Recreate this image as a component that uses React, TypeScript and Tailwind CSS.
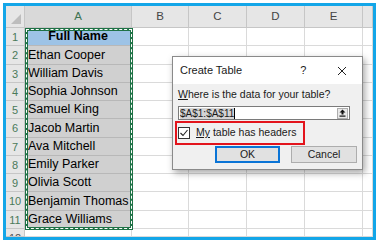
import React from "react";

const names = [
  "Ethan Cooper",
  "William Davis",
  "Sophia Johnson",
  "Samuel King",
  "Jacob Martin",
  "Ava Mitchell",
  "Emily Parker",
  "Olivia Scott",
  "Benjamin Thomas",
  "Grace Williams",
];

const cols = ["A", "B", "C", "D", "E", ""];

const CreateTableDialog = () => (
  <div className="absolute left-[166px] top-[50px] flex h-[114px] w-[191px] flex-col border border-[#8a8a8a] bg-[#f0f0f0] text-[10.5px] text-[#1a1a1a] shadow-[2px_3px_7px_rgba(0,0,0,0.35)]">
    {/* title bar */}
    <div className="flex h-[27px] items-center bg-white pl-[7px]">
      <span className="text-[11px]">Create Table</span>
      <span className="ml-[58px] text-[11px]">?</span>
      <svg className="ml-[31px]" width="10" height="10" viewBox="0 0 10 10">
        <path d="M1 1 L9 9 M9 1 L1 9" stroke="#222" strokeWidth="1" />
      </svg>
    </div>

    <div className="flex flex-col">
      <div className="ml-[5px] mt-[4px] leading-[13px]">
        <span className="underline">W</span>here is the data for your table?
      </div>

      <div className="ml-[5px] mt-[5px] flex h-[14px] w-[172px] items-center border border-[#7a7a7a] bg-white pl-[1px] pr-[1px]">
        <span className="bg-[#d4d4d4] leading-[11px] text-[10px]">$A$1:$A$11</span>
        <span className="h-[11px] w-px bg-black" />
        <div className="ml-auto flex h-[11px] w-[11px] items-center justify-center border border-[#adadad] bg-[#e8e8e8]">
          <svg width="7" height="8" viewBox="0 0 7 8">
            <path d="M3.5 0.5 L6.5 3.5 L4.5 3.5 L4.5 5.5 L2.5 5.5 L2.5 3.5 L0.5 3.5 Z" fill="#111" />
            <rect x="0.5" y="6.5" width="6" height="1.2" fill="#111" />
          </svg>
        </div>
      </div>

      <div className="ml-[2px] mt-px flex h-[24px] w-[130px] items-center border-2 border-[#e3141c] pl-px">
        <div className="flex h-[12px] w-[12px] items-center justify-center border border-[#333] bg-white">
          <svg width="10" height="10" viewBox="0 0 10 10">
            <path d="M1.5 5 L4 7.5 L8.5 2" fill="none" stroke="#222" strokeWidth="1.1" />
          </svg>
        </div>
        <span className="ml-[6px]">
          <span className="underline">My</span> table has headers
        </span>
      </div>

      <div className="ml-[42px] mt-px flex gap-[11px]">
        <div className="flex h-[17px] w-[65px] items-center justify-center border-2 border-[#0a74d6] bg-[#e1e1e1]">
          OK
        </div>
        <div className="flex h-[17px] w-[66px] items-center justify-center border border-[#adadad] bg-[#e1e1e1]">
          Cancel
        </div>
      </div>
    </div>
  </div>
);

export default function App() {
  return (
    <div
      className="h-[245px] w-[382px] bg-white pl-[3px] pt-[3px]"
      style={{ fontFamily: '"Liberation Sans", Arial, sans-serif' }}
    >
      <div className="relative h-[237px] w-[373px] overflow-hidden border-[3px] border-[#13a6e8]">
        <div className="grid h-full w-full grid-cols-[19px_107px_57px_58px_58px_58px_1fr] grid-rows-[22px_repeat(11,18.27px)_1fr]">
          {/* header row */}
          <div className="relative border-b border-r border-[#c6c6c6] bg-[#e6e6e6]">
            <svg className="absolute bottom-[3px] right-[3px]" width="10" height="10" viewBox="0 0 10 10">
              <path d="M10 0 L10 10 L0 10 Z" fill="#bdbdbd" />
            </svg>
          </div>
          {cols.map((c, i) => (
            <div
              key={"h" + i}
              className={`flex items-center justify-center border-b border-r border-[#c6c6c6] text-[11.5px] ${
                c === "A" ? "bg-[#d9d9d9] text-[#3d7352]" : "bg-[#e6e6e6] text-[#444]"
              }`}
            >
              {c}
            </div>
          ))}

          {/* data rows */}
          {Array.from({ length: 12 }).map((_, r) => (
            <React.Fragment key={"r" + r}>
              <div
                className={`flex items-start justify-center overflow-hidden border-b border-r border-[#c6c6c6] bg-[#e6e6e6] text-[11px] ${
                  r < 11 ? "text-[#4a7a5a]" : "text-[#555]"
                }`}
              >
                <span className="mt-[2px] leading-[14px]">{r + 1}</span>
              </div>
              {cols.map((c, i) => {
                const isA = i === 0 && r < 11;
                const bg = isA ? (r === 0 ? "bg-[#9dc3e6]" : "bg-[#d0d0d0]") : "bg-white";
                return (
                  <div
                    key={"c" + r + "-" + i}
                    className={`flex items-center overflow-hidden whitespace-nowrap border-b border-r ${
                      isA ? "border-[#b8b8b8]" : "border-[#dadada]"
                    } ${bg} text-[12.5px] text-black ${r === 0 && i === 0 ? "justify-center font-bold" : "pl-[3px]"}`}
                  >
                    {i === 0 && r === 0 && "Full Name"}
                    {i === 0 && r > 0 && r < 11 && names[r - 1]}
                  </div>
                );
              })}
            </React.Fragment>
          ))}
        </div>

        {/* marching ants around A1:A11 */}
        <div className="absolute left-[19px] top-[22px] h-[202px] w-[108px] border-[3px] border-[#1f7246]">
          <div className="absolute inset-[-2px] border border-dashed border-white" />
        </div>

        <CreateTableDialog />
      </div>
    </div>
  );
}
